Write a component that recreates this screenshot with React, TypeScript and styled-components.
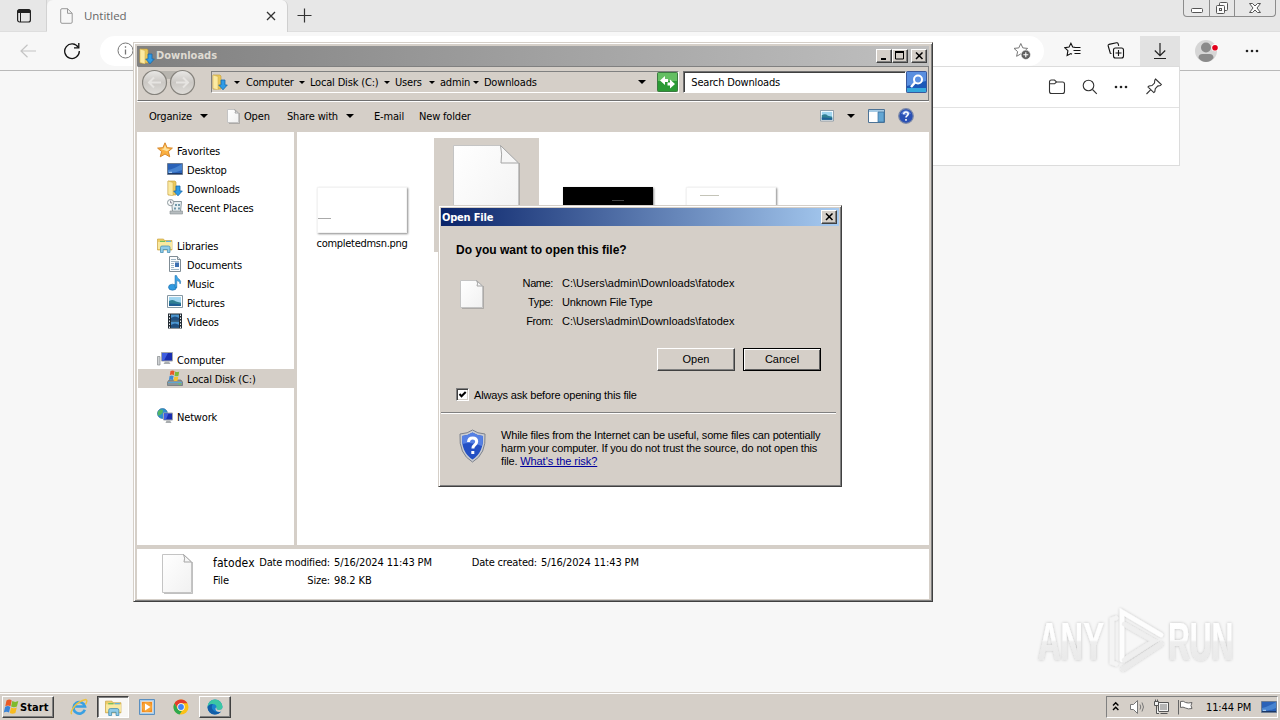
import React from 'react';
import styled, { createGlobalStyle, css } from 'styled-components';

const face = '#d5cfc8';
const tahoma = `'DejaVu Sans Condensed', 'DejaVu Sans', sans-serif`;
const msSans = `'Liberation Sans', sans-serif`;

const GlobalStyle = createGlobalStyle`
  body {
    margin: 0;
    overflow: hidden;
    background: #f7f7f7;
  }
  * {
    box-sizing: border-box;
  }
  svg {
    display: block;
    flex: none;
  }
`;

const Desktop = styled.div`
  position: relative;
  display: flex;
  flex-direction: column;
  width: 1280px;
  height: 720px;
  overflow: hidden;
  color: #000;
  font-family: ${tahoma};
  font-size: 11px;
  letter-spacing: -0.17px;
  white-space: nowrap;
`;

/* browser */
const Browser = styled.div`
  flex: 1;
  display: flex;
  flex-direction: column;
  background: #f7f7f7;
`;
const TabStrip = styled.div`
  display: flex;
  height: 32px;
  background: #e7e7e7;
  border-bottom: 1px solid #dedede;
`;
const TabMenu = styled.div`
  width: 47px;
  padding: 8px 0 0 16px;
  border-right: 1px solid #d2d2d2;
`;
const Tab = styled.div`
  display: flex;
  align-items: center;
  width: 241px;
  height: 32px;
  padding: 0 11px 0 13px;
  background: #f7f7f7;
  border-radius: 6px 6px 0 0;
  border-right: 1px solid #cfcfcf;
`;
const TabTitle = styled.span`
  flex: 1;
  margin-left: 11px;
  padding-bottom: 2px;
  font-family: 'Open Sans', sans-serif;
  font-size: 11.5px;
  letter-spacing: -0.05px;
  color: #666;
`;
const NewTab = styled.div`
  flex: 1;
  padding: 8px 0 0 9px;
`;
const WindowControls = styled.div`
  display: flex;
  width: 93px;
  height: 17px;
  margin-right: 4px;
  border: 1px solid #8c8c8c;
  border-top: none;
  border-radius: 0 0 4px 4px;
`;
const WindowControl = styled.div<{ $width: number }>`
  display: flex;
  justify-content: center;
  width: ${({ $width }) => $width}px;
  & + & {
    border-left: 1px solid #8c8c8c;
  }
`;
const BrowserToolbar = styled.div`
  display: flex;
  align-items: center;
  height: 39px;
  padding-bottom: 1px;
  border-bottom: 1px solid #b9b9b9;
`;
const ToolbarIcon = styled.div<{ $width: number; $active?: boolean }>`
  display: flex;
  align-items: center;
  justify-content: center;
  width: ${({ $width }) => $width}px;
  height: 30px;
  background: ${({ $active }) => ($active ? '#e2e2e2' : 'transparent')};
`;
const AddressPill = styled.div`
  display: flex;
  align-items: center;
  justify-content: space-between;
  width: 944px;
  height: 30px;
  padding: 0 13px 0 17px;
  border-radius: 15px;
  background: #fff;
`;
const Flyout = styled.div`
  position: absolute;
  top: 66px;
  right: 100px;
  width: 360px;
  height: 100px;
  background: #fff;
  border: 1px solid #dcdcdc;
`;
const FlyoutHeader = styled.div`
  display: flex;
  align-items: center;
  justify-content: flex-end;
  gap: 16px;
  height: 41px;
  padding: 0 16px 1px 0;
  border-bottom: 1px solid #e2e2e2;
`;
const Watermark = styled.div`
  position: absolute;
  left: 1030px;
  top: 600px;
`;

/* explorer */
const ExplorerWindow = styled.div`
  position: absolute;
  left: 133px;
  top: 42px;
  display: flex;
  flex-direction: column;
  width: 800px;
  height: 560px;
  padding: 3px 2px 1px 2px;
  background: ${face};
  border: 1px solid;
  border-color: ${face} #404040 #404040 ${face};
  box-shadow: inset 1px 1px #fff, inset -1px -1px #808080;
`;
const TitleBar = styled.div<{ $active?: boolean }>`
  display: flex;
  align-items: center;
  height: ${({ $active }) => ($active ? 18 : 20)}px;
  margin: ${({ $active }) => ($active ? '0' : '0 1px')};
  padding: ${({ $active }) => ($active ? '0 2px 0 0' : '0 2px 1px')};
  font-weight: bold;
  letter-spacing: ${({ $active }) => ($active ? '-0.2px' : '0')};
  color: ${({ $active }) => ($active ? '#fff' : '#dedad2')};
  background: ${({ $active }) =>
    $active ? 'linear-gradient(90deg, #0a246a, #a6caf0)' : 'linear-gradient(90deg, #808080, #c0c0c0)'};
`;
const TitleText = styled.span`
  flex: 1;
  margin-left: 1px;
`;
const raised = css`
  background: ${face};
  border: 1px solid;
  border-color: #fff #404040 #404040 #fff;
  box-shadow: inset -1px -1px #808080;
`;
const CaptionButton = styled.div<{ $gap?: boolean }>`
  ${raised}
  display: flex;
  align-items: center;
  justify-content: center;
  width: 16px;
  height: 14px;
  margin-left: ${({ $gap }) => ($gap ? 3 : 0)}px;
`;
const NavBar = styled.div`
  display: flex;
  align-items: center;
  height: 35px;
  margin: 0 1px;
  padding: 0 1px 3px 4px;
  border: 1px solid;
  border-color: #808080 #808080 #707070 #fff;
  box-shadow: 0 1px #fff;
`;
const RoundButtons = styled.div`
  width: 64px;
`;
const AddressBar = styled.div`
  display: flex;
  align-items: center;
  width: 469px;
  height: 22px;
  margin-left: 5px;
  border: 1px solid;
  border-color: #808080 #fff #fff #808080;
`;
const Crumb = styled.span<{ $width: number }>`
  display: flex;
  align-items: center;
  justify-content: space-between;
  width: ${({ $width }) => $width}px;
`;
const CrumbSpacer = styled.span`
  flex: 1;
`;
const Arrow = styled.span<{ $size?: number }>`
  flex: none;
  width: 0;
  border: ${({ $size = 3 }) => $size}px solid transparent;
  border-top: ${({ $size = 3 }) => $size}px solid #000;
  border-bottom: none;
`;
const SearchBox = styled.div`
  width: 223px;
  height: 22px;
  margin: 0 0 0 4px;
  padding: 0 7px;
  line-height: 21px;
  background: #fff;
  border: 1px solid;
  border-color: #707070 #fff #fff #707070;
  box-shadow: inset 1px 1px #404040;
`;
const CommandBar = styled.div`
  display: flex;
  align-items: center;
  height: 31px;
  padding: 0 16px 1px 13px;
`;
const Command = styled.div<{ $width: number; $gap?: number }>`
  display: flex;
  align-items: center;
  gap: ${({ $gap = 8 }) => $gap}px;
  width: ${({ $width }) => $width}px;
`;
const CommandRight = styled.div`
  display: flex;
  align-items: center;
  gap: 13px;
  margin-left: auto;
`;
const Panes = styled.div`
  display: flex;
  height: 413px;
  margin: 0 1px;
  background: #fff;
`;
const NavPane = styled.div`
  width: 160px;
  padding-top: 9px;
  border-right: 3px solid ${face};
`;
const NavGroup = styled.div`
  margin-bottom: 19px;
`;
const NavItem = styled.div<{ $child?: boolean; $selected?: boolean }>`
  display: flex;
  align-items: center;
  gap: 4px;
  height: 19px;
  margin-left: 1px;
  padding-left: ${({ $child }) => ($child ? 29 : 19)}px;
  background: ${({ $selected }) => ($selected ? face : 'transparent')};
  svg {
    margin-bottom: 2px;
  }
`;
const NavLabel = styled.span`
  padding-top: 2px;
`;
const Files = styled.div`
  display: grid;
  grid-template-columns: 124px 122px 123px 105px;
  align-content: start;
  padding: 6px 0 0 13px;
`;
const FileTile = styled.div<{ $selected?: boolean }>`
  display: flex;
  flex-direction: column;
  align-items: center;
  justify-content: flex-end;
  width: 105px;
  height: 114px;
  padding-right: 1px;
  background: ${({ $selected }) => ($selected ? face : 'transparent')};
`;
const Thumb = styled.div<{ $dark?: boolean }>`
  width: 90px;
  height: 46px;
  margin-bottom: 4px;
  background: ${({ $dark }) => ($dark ? '#000' : '#fff')};
  border: 1px solid ${({ $dark }) => ($dark ? '#000' : '#f3f3f3')};
  box-shadow: 1px 1px 2px #8a8a8a;
`;
const ThumbLine = styled.div<{ $left: number; $top: number; $width: number; $color: string }>`
  width: ${({ $width }) => $width}px;
  height: 1px;
  margin: ${({ $top, $left }) => `${$top}px 0 0 ${$left}px`};
  background: ${({ $color }) => $color};
`;
const FileName = styled.span`
  height: 15px;
  line-height: 14px;
  letter-spacing: -0.29px;
`;
const DetailsPane = styled.div`
  display: flex;
  height: 50px;
  margin: 4px 1px 0;
  padding: 5px 0 0 25px;
  background: #fff;
`;
const DetailColumn = styled.div<{ $width: number }>`
  display: flex;
  flex-direction: column;
  width: ${({ $width }) => $width}px;
  line-height: 18px;
`;
const DetailRow = styled.div<{ $label: number }>`
  display: grid;
  grid-template-columns: ${({ $label }) => $label}px auto;
  column-gap: 4px;
  height: 18px;
  letter-spacing: -0.12px;
  & > :first-child {
    text-align: right;
    letter-spacing: -0.2px;
  }
`;
const DetailName = styled.span`
  height: 18px;
  font-size: 12px;
  letter-spacing: 0.1px;
`;
const DetailKind = styled.span`
  height: 18px;
`;

/* dialog */
const Dialog = styled.div`
  position: absolute;
  left: 438px;
  top: 205px;
  display: flex;
  flex-direction: column;
  width: 404px;
  height: 282px;
  padding: 2px;
  background: ${face};
  border: 1px solid;
  border-color: ${face} #404040 #404040 ${face};
  box-shadow: inset 1px 1px #fff, inset -1px -1px #808080;
`;
const DialogBody = styled.div`
  padding: 16px 18px 0 15px;
  font-family: ${msSans};
`;
const Question = styled.div`
  height: 16px;
  line-height: 16px;
  font-size: 12px;
  font-weight: bold;
  letter-spacing: 0;
`;
const FileInfo = styled.div`
  display: flex;
  height: 57px;
  margin-top: 16px;
`;
const FileInfoIcon = styled.div`
  width: 49px;
  padding: 6px 0 0 4px;
`;
const FileInfoGrid = styled.div`
  display: grid;
  grid-template-columns: 48px auto;
  grid-auto-rows: 19px;
  column-gap: 9px;
  line-height: 19px;
`;
const InfoLabel = styled.span`
  text-align: right;
  letter-spacing: -0.4px;
`;
const InfoValue = styled.span<{ $path?: boolean }>`
  letter-spacing: ${({ $path }) => ($path ? '0' : '-0.17px')};
`;
const Buttons = styled.div`
  display: flex;
  justify-content: flex-end;
  gap: 8px;
  margin-top: 17px;
`;
const Button = styled.button<{ $primary?: boolean }>`
  ${raised}
  width: 78px;
  height: 23px;
  padding: 0 0 1px;
  font: 11px ${msSans};
  ${({ $primary }) =>
    $primary &&
    css`
      border-color: #000;
      box-shadow: inset 1px 1px #fff, inset -1px -1px #606060;
    `}
`;
const CheckRow = styled.div`
  display: flex;
  align-items: center;
  gap: 5px;
  margin-top: 17px;
`;
const CheckBox = styled.div`
  width: 13px;
  height: 13px;
  background: #fff;
  border: 1px solid;
  border-color: #808080 #fff #fff #808080;
  box-shadow: inset 1px 1px #404040, inset -1px -1px ${face};
`;
const Separator = styled.div`
  height: 2px;
  margin: 11px 3px 0 0;
  border-top: 1px solid #808080;
  border-bottom: 1px solid #fff;
`;
const Warning = styled.div`
  display: flex;
  gap: 15px;
  padding: 15px 0 0 18px;
  font-family: ${msSans};
  line-height: 13px;
`;
const RiskLink = styled.a`
  color: #00009c;
  letter-spacing: -0.05px;
  text-decoration: underline;
`;

/* taskbar */
const Taskbar = styled.div`
  position: relative;
  display: flex;
  align-items: flex-end;
  height: 28px;
  padding: 0 2px 2px;
  background: ${face};
  border-top: 1px solid ${face};
  box-shadow: inset 0 1px #fff;
`;
const StartButton = styled.div`
  ${raised}
  display: flex;
  align-items: center;
  width: 52px;
  height: 22px;
  font-weight: bold;
  letter-spacing: 0.1px;
`;
const TaskItem = styled.div<{ $state?: 'open' | 'pressed'; $left: number; $width?: number }>`
  display: flex;
  align-items: center;
  justify-content: center;
  width: ${({ $width = 18 }) => $width}px;
  height: 22px;
  margin-left: ${({ $left }) => $left}px;
  ${({ $state }) => $state === 'open' && raised}
  ${({ $state }) =>
    $state === 'pressed' &&
    css`
      background: #f8f7f5;
      border: 1px solid;
      border-color: #404040 #fff #fff #404040;
      box-shadow: inset 1px 1px #808080;
    `}
`;
const Tray = styled.div`
  display: flex;
  align-items: center;
  width: 172px;
  height: 22px;
  margin-left: auto;
  padding-left: 5px;
  border: 1px solid;
  border-color: #808080 #fff #fff #808080;
`;
const Clock = styled.span`
  flex: 1;
  margin-left: 12px;
  letter-spacing: -0.12px;
`;

const FileGlyph = ({ w, h }: { w: number; h: number }) => {
  const fold = Math.round(w * 0.27);
  const x = w - 1.5 - fold;
  return (
    <svg width={w} height={h} viewBox={`0 0 ${w} ${h}`}>
      <defs>
        <linearGradient id={`page${w}`} x1="0" y1="0" x2="1" y2="1">
          <stop offset="0" stopColor="#fff" />
          <stop offset="1" stopColor="#f1f1f1" />
        </linearGradient>
      </defs>
      <path d={`M.5 .5H${x}L${w - 1.5} ${fold}V${h - 1.5}H.5Z`} fill={`url(#page${w})`} stroke="#c4c4c4" />
      <path d={`M${w - 0.5} ${fold}V${h - 0.5}H2`} fill="none" stroke="#8c8c8c" strokeOpacity=".55" />
      <path d={`M${x} .5Q${x + 2} ${fold / 2} ${x + 0.5} ${fold}H${w - 1.5}Z`} fill="#f6f6f6" stroke="#a5a5a5" />
    </svg>
  );
};

const DownloadsIcon = () => (
  <svg width="16" height="16" viewBox="0 0 16 16">
    <path d="M1 1h7l1 1v13H1z" fill="#eac95c" stroke="#c29c35" strokeWidth=".6" />
    <path d="M1 1l5 1.5V16l-5-1.5z" fill="#fbeaa2" stroke="#cfab48" strokeWidth=".5" />
    <path d="M9 6h4v5h2.300L11 15.800 6.700 11H9z" fill="#2f9be6" stroke="#1768ab" strokeWidth=".8" />
  </svg>
);

const LibraryIcon = ({ size = 16 }: { size?: number }) => (
  <svg width={size} height={size} viewBox="0 0 16 16">
    <path d="M.5 2h6l1 1.5h7.500V13H.5z" fill="#efcf68" stroke="#c39a36" strokeWidth=".6" />
    <path d="M1 5h14v7H1z" fill="#f9e9a0" />
    <path d="M3 4.400h5" stroke="#6fbf63" strokeWidth="1.200" />
    <path d="M9 4.400h5" stroke="#5fb2de" strokeWidth="1.200" />
    <path d="M3.500 15.500v-5q0-1.500 1.500-1.500h6.500q1.500 0 1.500 1.500v5h-2.600v-3H6.200v3z" fill="#8fcbe8" stroke="#3b87ad" strokeWidth=".7" />
  </svg>
);

const StarIcon = () => (
  <svg width="16" height="16" viewBox="0 0 16 16">
    <path d="M8 .8l2.100 4.900 5.300.4-4 3.400 1.300 5.300L8 12l-4.700 2.800 1.300-5.300-4-3.400 5.300-.4z" fill="#fbb040" stroke="#d8882a" />
    <path d="M8 3l1.500 3.600 3.500.3-3 2.300L4 7l2.700-.4z" fill="#ffe19a" />
  </svg>
);

const ScreenIcon = () => (
  <svg width="16" height="14" viewBox="0 0 16 14">
    <path d="M.5 1.500h15v11H.5z" fill="#2a62b8" stroke="#6c7c92" />
    <path d="M1 8Q7 7 15 2v6q-6 3-14 3z" fill="#4884d0" />
    <path d="M1 11.500h14" stroke="#1b3767" />
    <path d="M2 10.300h3" stroke="#b9ddfb" />
  </svg>
);

const RecentIcon = () => (
  <svg width="16" height="16" viewBox="0 0 16 16">
    <path d="M4.500 2.500h10l-1 10H5.500z" fill="#e8eff2" stroke="#8b989e" />
    <path d="M3 12h12.500v3H3z" fill="#b6bcbf" stroke="#868d90" strokeWidth=".6" />
    <path d="M8 5h2v2H8zm3 0h2v2h-2zM7 8.500h2v2H7zm4 0h2v2h-2z" fill="#739aac" />
    <circle cx="3.600" cy="3.600" r="3.100" fill="#f8fafa" stroke="#8f9a9f" />
    <path d="M3.600 1.600v2.300h1.700" fill="none" stroke="#667" strokeWidth=".8" />
  </svg>
);

const DocumentIcon = () => (
  <svg width="16" height="16" viewBox="0 0 16 16">
    <path d="M2.500.5h8l3 3v12h-11z" fill="#fbfcfd" stroke="#7f8c95" />
    <path d="M10.500.5v3h3" fill="#dfe6ea" stroke="#7f8c95" />
    <path d="M4 3.500h5M4 5.500h8M4 7.500h3M4 9.500h3M4 11.500h3M4 13.500h8" stroke="#8aa4b7" strokeWidth=".8" />
    <path d="M8 6.500h4v4.500H8z" fill="#3c6fb0" />
  </svg>
);

const MusicIcon = () => (
  <svg width="16" height="16" viewBox="0 0 16 16">
    <ellipse cx="5.500" cy="12.200" rx="4" ry="3" fill="#2f9ae0" stroke="#1a6aa8" strokeWidth=".6" />
    <path d="M8 12.500V.5h1.500q.5 2.500 3 4 2 1.800.6 4.500.2-2.700-3.300-3.500v7z" fill="#3ea5e6" stroke="#1a6aa8" strokeWidth=".5" />
  </svg>
);

const PictureIcon = ({ size = 16 }: { size?: number }) => (
  <svg width={size} height={size * 0.82} viewBox="0 0 16 13">
    <path d="M.5.5h15v12H.5z" fill="#fff" stroke="#8294a0" />
    <path d="M2 2h12v9H2z" fill="#9fd5f0" />
    <path d="M2 6q4-2.500 7 .5l5 1.200V11H2z" fill="#2f7f93" />
    <path d="M2 8.500q6 0 12 1V11H2z" fill="#1f5f96" />
  </svg>
);

const VideoIcon = () => (
  <svg width="16" height="16" viewBox="0 0 16 16">
    <path d="M1 .5h14v15H1z" fill="#222b33" />
    <path d="M4 1.500h8v6H4zM4 8.500h8v6H4z" fill="#4b95cf" />
    <path d="M4 5q4-3 8 0v2.500H4zM4 12q4-3 8 0v2.500H4z" fill="#1f4f80" />
    <path d="M2.500 1.500v14M13.500 1.500v14" stroke="#e8edf0" strokeDasharray="1.500 1.500" />
  </svg>
);

const ComputerIcon = () => (
  <svg width="16" height="16" viewBox="0 0 16 16">
    <path d="M.5 5.500h2.500v8.500H.5z" fill="#cfd2d4" stroke="#85898c" strokeWidth=".7" />
    <path d="M4.500 1.500h11v8.500h-11z" fill="#1a2fb0" stroke="#a2a6aa" />
    <path d="M5 2h6L7 9.500H5z" fill="#3f5fe0" />
    <path d="M8 10.500h4l1.500 2.500h-7z" fill="#a9adb0" />
  </svg>
);

const DiskIcon = () => (
  <svg width="16" height="16" viewBox="0 0 16 16">
    <path d="M2 10h12l1.500 2v3.500H.5V12z" fill="#8c9599" stroke="#59636a" strokeWidth=".6" />
    <path d="M1 12.500h14" stroke="#5fa7cf" />
    <path d="M11.500 14h2.500" stroke="#56dd4a" />
    <path d="M3.500 1q2-1.200 4 0l-.7 4.200q-2-1.200-4 0z" fill="#e9582b" />
    <path d="M8.200 1.500q2 1 4 0l-.7 4.200q-2 1-4 0z" fill="#7dba3a" />
    <path d="M2.600 6q2-1.200 4 0l-.7 4q-2-1-4 0z" fill="#3d8bd6" />
    <path d="M7.300 6.500q2 1 4 0l-.7 4q-2 1-4 0z" fill="#f6c22f" />
  </svg>
);

const NetworkIcon = () => (
  <svg width="16" height="16" viewBox="0 0 16 16">
    <circle cx="5.500" cy="5.500" r="5" fill="#2f8fd0" stroke="#1d6398" strokeWidth=".6" />
    <path d="M2 2.500q3-2 4 0 0 3-3 4.500T1 7Q0 4 2 2.500z" fill="#52b765" />
    <path d="M6.500 5h9v7h-9z" fill="#1a2fb0" stroke="#a2a6aa" />
    <path d="M7 5.500h4.500L9 11.500H7z" fill="#3f5fe0" />
    <path d="M9.500 12.500h3.500l1.500 2.500h-6z" fill="#a9adb0" />
  </svg>
);

const WindowsFlag = () => (
  <svg width="17" height="16" viewBox="0 0 17 16">
    <path d="M3.500 1.500q3-1.800 5.200 0L7.500 7.200q-2.400-1.600-5.200 0z" fill="#ea5a26" />
    <path d="M9.300 2.100q2.800 1.600 6 0l-1.400 5.500q-3 1.500-5.800 0z" fill="#7fba2c" />
    <path d="M2.100 7.900q2.800-1.600 5.200 0L6 13.600q-2.500-1.500-5.200 0z" fill="#3a84d8" />
    <path d="M8 8.500q2.800 1.500 5.800 0l-1.400 5.500q-3 1.500-5.600 0z" fill="#f8bb20" />
  </svg>
);

const Dots = () => (
  <svg width="14" height="4" viewBox="0 0 14 4" fill="#222">
    <circle cx="2" cy="2" r="1.300" />
    <circle cx="7" cy="2" r="1.300" />
    <circle cx="12" cy="2" r="1.300" />
  </svg>
);

const CloseGlyph = () => (
  <svg width="9" height="8" viewBox="0 0 9 8">
    <path d="M1 .5l6.500 6.500M7.500 .5L1 7" stroke="#000" strokeWidth="1.500" />
  </svg>
);

const crumbs: [string, number][] = [
  ['Computer', 64],
  ['Local Disk (C:)', 85],
  ['Users', 45],
  ['admin', 44],
];

const navGroups: { name: string; icon: React.ReactNode; items: [string, React.ReactNode][] }[] = [
  {
    name: 'Favorites',
    icon: <StarIcon />,
    items: [
      ['Desktop', <ScreenIcon />],
      ['Downloads', <DownloadsIcon />],
      ['Recent Places', <RecentIcon />],
    ],
  },
  {
    name: 'Libraries',
    icon: <LibraryIcon />,
    items: [
      ['Documents', <DocumentIcon />],
      ['Music', <MusicIcon />],
      ['Pictures', <PictureIcon />],
      ['Videos', <VideoIcon />],
    ],
  },
  { name: 'Computer', icon: <ComputerIcon />, items: [['Local Disk (C:)', <DiskIcon />]] },
  { name: 'Network', icon: <NetworkIcon />, items: [] },
];

function BrowserWindow() {
  return (
    <Browser>
      <TabStrip>
        <TabMenu>
          <svg width="16" height="16" viewBox="0 0 16 16">
            <rect x="1.600" y="1.600" width="12.800" height="12.400" rx="2" fill="none" stroke="#222" strokeWidth="1.200" />
            <path d="M1.500 5V3q0-1.500 1.500-1.500h10q1.500 0 1.500 1.500v2z" fill="#222" />
            <path d="M4.500 5v9" stroke="#222" />
          </svg>
        </TabMenu>
        <Tab>
          <svg width="13" height="16" viewBox="0 0 13 16" fill="none" stroke="#999">
            <path d="M.7 2q0-1.300 1.300-1.300h5.500l4.700 4.600V14q0 1.300-1.300 1.300H2Q.7 15.300.7 14zM7.500.7v4.600h4.700" />
          </svg>
          <TabTitle>Untitled</TabTitle>
          <svg width="10" height="10" viewBox="0 0 10 10" stroke="#333" strokeWidth="1.300">
            <path d="M1 1l8 8M9 1L1 9" />
          </svg>
        </Tab>
        <NewTab>
          <svg width="15" height="15" viewBox="0 0 15 15" stroke="#333" strokeWidth="1.200">
            <path d="M7.500.5v14M.5 7.500h14" />
          </svg>
        </NewTab>
        <WindowControls>
          <WindowControl $width={25}>
            <svg width="14" height="16" viewBox="0 0 14 16">
              <rect x="1.500" y="8.500" width="11" height="4" rx="1" fill="#fff" stroke="#555" />
            </svg>
          </WindowControl>
          <WindowControl $width={25}>
            <svg width="14" height="16" viewBox="0 0 14 16" fill="#fafafa" stroke="#555">
              <rect x="4.500" y="2.500" width="8" height="8" rx="1" />
              <rect x="1.500" y="5.500" width="8" height="8" rx="1" />
              <rect x="4.500" y="8.500" width="2" height="2" />
            </svg>
          </WindowControl>
          <WindowControl $width={41}>
            <svg width="14" height="16" viewBox="0 0 14 16">
              <path d="M1.500 3.500h3L7 6l2.500-2.500h3L9 8l3.500 4.500h-3L7 10l-2.500 2.500h-3L5 8z" fill="#fff" stroke="#555" />
            </svg>
          </WindowControl>
        </WindowControls>
      </TabStrip>
      <BrowserToolbar>
        <ToolbarIcon $width={56}>
          <svg width="16" height="14" viewBox="0 0 16 14" fill="none" stroke="#c4c4c4" strokeWidth="1.200">
            <path d="M16 7H1M7.500.8L1 7l6.500 6.200" />
          </svg>
        </ToolbarIcon>
        <ToolbarIcon $width={32}>
          <svg width="18" height="18" viewBox="0 0 18 18" fill="none" stroke="#111" strokeWidth="1.300">
            <path d="M15.300 5.500A7.300 7.300 0 1 0 16.300 9" />
            <path d="M15.800 1v4.800H11" />
          </svg>
        </ToolbarIcon>
        <ToolbarIcon $width={12} />
        <AddressPill>
          <svg width="17" height="17" viewBox="0 0 17 17" fill="none" stroke="#777">
            <circle cx="8.500" cy="8.500" r="7.500" />
            <path d="M8.500 7.500v5M8.500 4.300v1.500" strokeWidth="1.300" />
          </svg>
          <svg width="18" height="18" viewBox="0 0 18 18">
            <path d="M7.800 1.500l2 4.400 4.800.5-3.600 3.200 1 4.700-4.200-2.400-4.200 2.400 1-4.700L1 6.400l4.800-.5z" fill="none" stroke="#777" />
            <circle cx="12.800" cy="12.800" r="4.700" fill="#606060" stroke="#fff" strokeWidth=".6" />
            <path d="M12.800 10.300v5M10.300 12.800h5" stroke="#fff" strokeWidth="1.100" />
          </svg>
        </AddressPill>
        <ToolbarIcon $width={56}>
          <svg width="17" height="17" viewBox="0 0 17 17" fill="none" stroke="#111" strokeWidth="1.100">
            <path d="M11 5.400l-2.300-.3L6.900 1.300 5.100 5.100.8 5.700l3.100 3-.8 4.900 3.800-2 1.100.6M11 5.500h5.500M9.500 8.500h7M10.500 11.500h6" />
          </svg>
        </ToolbarIcon>
        <ToolbarIcon $width={32}>
          <svg width="18" height="18" viewBox="0 0 18 18" fill="none" stroke="#111" strokeWidth="1.100">
            <rect x="6.500" y="6" width="10" height="10" rx="2" />
            <path d="M11.500 8v6M8.500 11h6M4.500 11.500l-1.200-.3L1.200 4q-.3-1.200.8-1.600L9.500.8q1.300-.2 1.700 1l.5 2" />
          </svg>
        </ToolbarIcon>
        <ToolbarIcon $width={8} />
        <ToolbarIcon $width={40} $active>
          <svg width="14" height="18" viewBox="0 0 14 18" fill="none" stroke="#222" strokeWidth="1.200">
            <path d="M7 1v12.500M1.800 8.500L7 13.700l5.200-5.200M1 16.500h12" />
          </svg>
        </ToolbarIcon>
        <ToolbarIcon $width={54}>
          <svg width="24" height="24" viewBox="0 0 24 24">
            <circle cx="11" cy="12" r="11" fill="#d6d6d6" />
            <circle cx="11" cy="8.500" r="5" fill="#8a8a8a" />
            <path d="M3.500 19q0-4 4-4h7q4 0 4 4-3 4-7.500 4t-7.500-4z" fill="#8a8a8a" />
            <circle cx="20" cy="8.700" r="3.600" fill="#fff" />
            <circle cx="20" cy="8.700" r="2.800" fill="#e3001b" />
          </svg>
        </ToolbarIcon>
        <ToolbarIcon $width={36}>
          <Dots />
        </ToolbarIcon>
      </BrowserToolbar>
      <Flyout>
        <FlyoutHeader>
          <svg width="18" height="16" viewBox="0 0 18 16" fill="none" stroke="#333" strokeWidth="1.100">
            <path d="M1.500 3q0-2 2-2h3l2 2h6q2 0 2 2v7.500q0 2-2 2h-11q-2 0-2-2zM1.500 4.800h5l2-1.800" />
          </svg>
          <svg width="16" height="16" viewBox="0 0 16 16" fill="none" stroke="#333" strokeWidth="1.100">
            <circle cx="6.500" cy="6.500" r="5.300" />
            <path d="M10.500 10.500l4.300 4.300" />
          </svg>
          <Dots />
          <svg width="19" height="17" viewBox="0 0 19 17" fill="none" stroke="#333" strokeWidth="1.100">
            <path d="M11.500 1l5.800 5.600-1 .9-2.600.6-2.400 2.600-.5 3-1 .9L4 9l1-1 3-.4 2.500-2.500.3-3zM6.800 11.600L2.500 16" />
          </svg>
        </FlyoutHeader>
      </Flyout>
    </Browser>
  );
}

function AnyRunLogo() {
  return (
    <Watermark>
      <svg width="230" height="80" viewBox="0 0 230 80">
        <defs>
          <linearGradient id="fade" gradientUnits="userSpaceOnUse" x1="0" y1="-38" x2="0" y2="2">
            <stop offset="0" stopColor="#fff" />
            <stop offset=".45" stopColor="#fdfdfd" />
            <stop offset=".5" stopColor="#eee" />
            <stop offset="1" stopColor="#e9e9e9" />
          </linearGradient>
          <filter id="soft" x="-10%" y="-10%" width="120%" height="120%">
            <feDropShadow dx="0" dy="0" stdDeviation="1.800" floodColor="#000" floodOpacity=".24" />
          </filter>
        </defs>
        <g filter="url(#soft)" fill="url(#fade)" fontFamily="Liberation Sans" fontSize="53" fontWeight="bold" letterSpacing="0">
          <text transform="translate(8 60) scale(.59 1)">ANY</text>
          <text transform="translate(138 60) scale(.57 1)">RUN</text>
        </g>
        <g filter="url(#soft)" fill="none" stroke="#fdfdfd" strokeWidth="4.500" strokeLinecap="round">
          <path d="M92 60V12L131 35" />
          <path d="M94 24l30 17-30 19" stroke="#efefef" />
          <path d="M86 18l-4 1.500v43l4 1.500" stroke="#f4f4f4" />
          <path d="M93 69l38-25" stroke="#ebebeb" />
        </g>
      </svg>
    </Watermark>
  );
}

function Explorer() {
  return (
    <ExplorerWindow>
      <TitleBar>
        <DownloadsIcon />
        <TitleText>Downloads</TitleText>
        <CaptionButton>
          <svg width="8" height="8" viewBox="0 0 8 8">
            <path d="M1 6h5v2H1z" />
          </svg>
        </CaptionButton>
        <CaptionButton>
          <svg width="10" height="9" viewBox="0 0 10 9">
            <path d="M.5 1h8v7h-8zM0 1h9" fill="none" stroke="#000" />
            <path d="M0 0h9v2H0z" />
          </svg>
        </CaptionButton>
        <CaptionButton $gap>
          <CloseGlyph />
        </CaptionButton>
      </TitleBar>
      <NavBar>
        <RoundButtons>
          <svg width="56" height="28" viewBox="0 0 56 28">
            <defs>
              <linearGradient id="ball" x1="0" y1="0" x2="0" y2="1">
                <stop offset="0" stopColor="#e9e8e6" />
                <stop offset=".5" stopColor="#cbc8c4" />
                <stop offset="1" stopColor="#dfddd9" />
              </linearGradient>
            </defs>
            <path d="M12 3h30v4q-14 8-30 0z" fill="#b7b4ae" />
            <circle cx="12.500" cy="14.500" r="12" fill="url(#ball)" stroke="#85827c" strokeWidth="1.200" />
            <circle cx="40.500" cy="14.500" r="12" fill="url(#ball)" stroke="#85827c" strokeWidth="1.200" />
            <path d="M19 14.500H7M12 9.500l-5 5 5 5M34 14.500h12M41 9.500l5 5-5 5" fill="none" stroke="#e6e4e1" strokeWidth="2" />
          </svg>
        </RoundButtons>
        <AddressBar>
          <Crumb $width={34}>
            <DownloadsIcon />
            <Arrow />
            <span />
          </Crumb>
          {crumbs.map(([name, width]) => (
            <Crumb key={name} $width={width}>
              {name}
              <CrumbSpacer />
              <Arrow />
              <Crumb $width={5} />
            </Crumb>
          ))}
          Downloads
          <CrumbSpacer />
          <Arrow $size={4} />
          <Crumb $width={11} />
          <svg width="21" height="20" viewBox="0 0 21 20">
            <rect x=".5" y=".5" width="20" height="19" rx="1" fill="#2a9a34" stroke="#3c7a41" />
            <path d="M1 1h19v8H1z" fill="#64bf62" />
            <path d="M8 4L3 8.500 8 13v-3h3V7H8zM13 7.500l5 4.500-5 4.500V13.500h-2.500v-3H13z" fill="#fff" />
          </svg>
        </AddressBar>
        <SearchBox>Search Downloads</SearchBox>
        <svg width="21" height="22" viewBox="0 0 21 22">
          <rect x=".5" y=".5" width="20" height="21" rx="1" fill="#1b58b8" stroke="#39589c" />
          <path d="M1 1h19v9Q10 12 1 15z" fill="#5a8fe0" />
          <path d="M1 17h19v4H1z" fill="#36a8dc" />
          <circle cx="12" cy="8.500" r="4" fill="none" stroke="#fff" strokeWidth="2" />
          <path d="M9 11.500L5 16" stroke="#fff" strokeWidth="2.500" />
        </svg>
      </NavBar>
      <CommandBar>
        <Command $width={78}>
          Organize
          <Arrow $size={4} />
        </Command>
        <Command $width={60} $gap={4}>
          <FileGlyph w={13} h={15} />
          <span>Open</span>
        </Command>
        <Command $width={87}>
          Share with
          <Arrow $size={4} />
        </Command>
        <Command $width={45}>E-mail</Command>
        <Command $width={80}>New folder</Command>
        <CommandRight>
          <PictureIcon size={14} />
          <Arrow $size={4} />
          <svg width="17" height="14" viewBox="0 0 17 14">
            <path d="M.5.5h16v13H.5z" fill="#fff" stroke="#4d7396" />
            <path d="M1 1h15v2H1z" fill="#a7cbe4" />
            <path d="M10 3h6v10h-6z" fill="#63a6d3" stroke="#3a6f9c" strokeWidth=".7" />
          </svg>
          <svg width="16" height="16" viewBox="0 0 16 16">
            <circle cx="8" cy="8" r="7.300" fill="#2a50b4" stroke="#7d8aa8" strokeWidth="1.200" />
            <path d="M3 5.500Q8-1 13 5.500 8 9 3 5.500z" fill="#6787d8" />
            <path d="M5.700 6.200Q5.900 4 8 4t2.200 2Q10.200 7 9 7.800 8 8.500 8 9.600M8 11v1.700" fill="none" stroke="#fff" strokeWidth="1.600" />
          </svg>
        </CommandRight>
      </CommandBar>
      <Panes>
        <NavPane>
          {navGroups.map((group) => (
            <NavGroup key={group.name}>
              <NavItem>
                {group.icon}
                <NavLabel>{group.name}</NavLabel>
              </NavItem>
              {group.items.map(([name, icon]) => (
                <NavItem key={name} $child $selected={name === 'Local Disk (C:)'}>
                  {icon}
                  <NavLabel>{name}</NavLabel>
                </NavItem>
              ))}
            </NavGroup>
          ))}
        </NavPane>
        <Files>
          <FileTile>
            <Thumb>
              <ThumbLine $left={0} $top={30} $width={13} $color="#aaa" />
            </Thumb>
            <FileName>completedmsn.png</FileName>
          </FileTile>
          <FileTile $selected>
            <FileGlyph w={67} h={92} />
            <FileName />
          </FileTile>
          <FileTile>
            <Thumb $dark>
              <ThumbLine $left={48} $top={12} $width={12} $color="#444" />
            </Thumb>
            <FileName />
          </FileTile>
          <FileTile>
            <Thumb>
              <ThumbLine $left={13} $top={7} $width={19} $color="#c4c4b8" />
            </Thumb>
            <FileName />
          </FileTile>
        </Files>
      </Panes>
      <DetailsPane>
        <DetailColumn $width={51}>
          <FileGlyph w={31} h={40} />
        </DetailColumn>
        <DetailColumn $width={46}>
          <DetailName>fatodex</DetailName>
          <DetailKind>File</DetailKind>
        </DetailColumn>
        <DetailColumn $width={210}>
          <DetailRow $label={71}>
            <span>Date modified:</span>
            <span>5/16/2024 11:43 PM</span>
          </DetailRow>
          <DetailRow $label={71}>
            <span>Size:</span>
            <span>98.2 KB</span>
          </DetailRow>
        </DetailColumn>
        <DetailColumn $width={200}>
          <DetailRow $label={68}>
            <span>Date created:</span>
            <span>5/16/2024 11:43 PM</span>
          </DetailRow>
        </DetailColumn>
      </DetailsPane>
    </ExplorerWindow>
  );
}

function OpenFileDialog() {
  return (
    <Dialog>
      <TitleBar $active>
        <TitleText>Open File</TitleText>
        <CaptionButton>
          <CloseGlyph />
        </CaptionButton>
      </TitleBar>
      <DialogBody>
        <Question>Do you want to open this file?</Question>
        <FileInfo>
          <FileInfoIcon>
            <FileGlyph w={24} h={29} />
          </FileInfoIcon>
          <FileInfoGrid>
            <InfoLabel>Name:</InfoLabel>
            <InfoValue $path>C:\Users\admin\Downloads\fatodex</InfoValue>
            <InfoLabel>Type:</InfoLabel>
            <InfoValue>Unknown File Type</InfoValue>
            <InfoLabel>From:</InfoLabel>
            <InfoValue $path>C:\Users\admin\Downloads\fatodex</InfoValue>
          </FileInfoGrid>
        </FileInfo>
        <Buttons>
          <Button>Open</Button>
          <Button $primary>Cancel</Button>
        </Buttons>
        <CheckRow>
          <CheckBox>
            <svg width="11" height="11" viewBox="0 0 11 11">
              <path d="M2.500 5l2 2.200L8.700 3" fill="none" stroke="#000" strokeWidth="2" />
            </svg>
          </CheckBox>
          Always ask before opening this file
        </CheckRow>
      </DialogBody>
      <Separator />
      <Warning>
        <svg width="27" height="34" viewBox="0 0 27 34">
          <path d="M13.500 1Q18 4.500 26 5q1.500 20-12.500 28Q-.500 25 1 5q8-.5 12.500-4z" fill="#c9ccd2" stroke="#7c818b" />
          <path d="M13.500 3.500Q18 6.500 24 7q.8 16.500-10.500 23.500Q2.200 23.500 3 7q6-.5 10.500-3.500z" fill="#2450c4" />
          <path d="M13.500 3.500Q18 6.500 24 7q.2 6-1.200 10Q12 12 3.500 15 2.700 11 3 7q6-.5 10.500-3.500z" fill="#5580e4" />
          <path d="M9.500 13q.3-4 4.200-4t4 3.600q0 2-2 3.400-1.800 1.300-1.800 3.500M13.800 22v3" fill="none" stroke="#fff" strokeWidth="3" />
        </svg>
        <div>
          While files from the Internet can be useful, some files can potentially
          <br />
          harm your computer. If you do not trust the source, do not open this
          <br />
          file. <RiskLink>What's the risk?</RiskLink>
        </div>
      </Warning>
    </Dialog>
  );
}

function App() {
  return (
    <Desktop>
      <GlobalStyle />
      <BrowserWindow />
      <AnyRunLogo />
      <Explorer />
      <OpenFileDialog />
      <Taskbar>
        <StartButton>
          <WindowsFlag />
          Start
        </StartButton>
        <TaskItem $left={16}>
          <svg width="18" height="18" viewBox="0 0 18 18" fill="none">
            <path d="M14.800 11.800A5.800 5.800 0 1 1 15 8.500H5" stroke="#3aa0e2" strokeWidth="2.600" />
            <path d="M2 16Q-.500 15 4 9T16 1.500q2 .8-.5 5" stroke="#eec23c" strokeWidth="1.300" />
          </svg>
        </TaskItem>
        <TaskItem $left={9} $width={32} $state="pressed">
          <LibraryIcon size={17} />
        </TaskItem>
        <TaskItem $left={9}>
          <svg width="16" height="16" viewBox="0 0 16 16">
            <path d="M.5.5h15v15H.5z" fill="#a9cdea" stroke="#5a8fc0" />
            <path d="M2.500 2.500h11v11h-11z" fill="#f38b1e" stroke="#fff" strokeWidth=".5" />
            <circle cx="8" cy="8" r="5" fill="#f7a437" />
            <path d="M6 4.500l5.500 3.500L6 11.500z" fill="#fff" />
          </svg>
        </TaskItem>
        <TaskItem $left={16}>
          <svg width="16" height="16" viewBox="0 0 16 16">
            <circle cx="8" cy="8" r="7.500" fill="#fbc116" />
            <path d="M1.500 4.200A7.500 7.500 0 0 1 14.500 4.250H8A3.800 3.800 0 0 0 4.700 9.900z" fill="#e33b2e" />
            <path d="M1.500 4.200L4.700 9.900A3.800 3.800 0 0 0 9 11.700L6.600 15.400A7.500 7.500 0 0 1 1.500 4.200z" fill="#2da94f" />
            <circle cx="8" cy="8" r="3.700" fill="#fff" />
            <circle cx="8" cy="8" r="2.900" fill="#4285f4" />
          </svg>
        </TaskItem>
        <TaskItem $left={9} $width={32} $state="open">
          <svg width="16" height="16" viewBox="0 0 16 16">
            <circle cx="8" cy="8" r="7.500" fill="#1a84cf" />
            <path d="M.5 8A7.500 7.500 0 0 1 15.500 8q0 3-3.500 3-3 0-2.500-2.500Q9.500 5 6 5 2 5 .5 8z" fill="#3cc8a4" />
            <path d="M.5 8Q2 5 6 5q-2.500 3 0 6 2.500 3 8 1.500-2 3-6.500 3A7.500 7.500 0 0 1 .5 8z" fill="#135ea8" />
            <path d="M9.500 8.500Q9 11 12 11q3.500 0 3.500-3l.5 3-3 2Q8 13 8.500 9z" fill="#d5cfc8" />
          </svg>
        </TaskItem>
        <Tray>
          <svg width="8" height="12" viewBox="0 0 8 12" fill="none" stroke="#000" strokeWidth="1.400">
            <path d="M1 4.500l2.700-2.700 2.700 2.700M1 9l2.700-2.700L6.400 9" />
          </svg>
          <TaskItem $left={9} $width={18}>
            <svg width="18" height="16" viewBox="0 0 18 16" fill="#fff" stroke="#777">
              <path d="M1.500 5.500h3l4-4v13l-4-4h-3z" />
              <path d="M11 5.500q1.500 2.500 0 5M13 3.500q3 4.500 0 9" fill="none" />
            </svg>
          </TaskItem>
          <TaskItem $left={5} $width={18}>
            <svg width="17" height="16" viewBox="0 0 17 16" fill="#f2f2f2" stroke="#555">
              <path d="M5.500 3.500h10v9h-10zM7.500 14.500h7" />
              <path d="M7 5h7v6H7z" fill="#b5b5b5" stroke="none" />
              <path d="M1.500 2.500h4v4h-4zM2.500.5v2M4.500.5v2M3.500 6.500v8H6" />
            </svg>
          </TaskItem>
          <TaskItem $left={6} $width={18}>
            <svg width="16" height="16" viewBox="0 0 16 16" fill="#fff" stroke="#666">
              <path d="M1.500 1v14.500M3.500 2.500q3-1 5 1 2.500 1 6.500 0-2 3 0 6-4 1-6.500-.5-2.500-1.500-5-.5z" />
            </svg>
          </TaskItem>
          <Clock>11:44 PM</Clock>
          <ScreenIcon />
        </Tray>
      </Taskbar>
    </Desktop>
  );
}

export default App;
